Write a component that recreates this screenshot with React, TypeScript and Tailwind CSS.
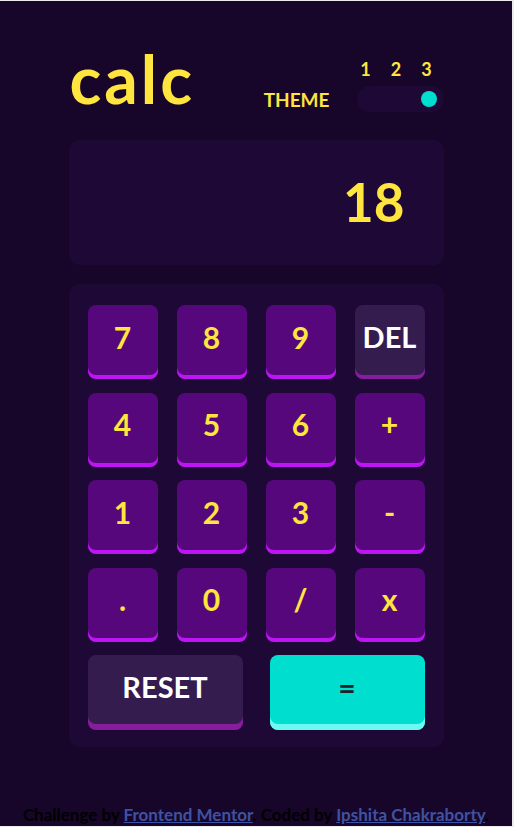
import React from "react";

const keys: { label: string; kind: "num" | "del" }[] = [
  { label: "7", kind: "num" },
  { label: "8", kind: "num" },
  { label: "9", kind: "num" },
  { label: "DEL", kind: "del" },
  { label: "4", kind: "num" },
  { label: "5", kind: "num" },
  { label: "6", kind: "num" },
  { label: "+", kind: "num" },
  { label: "1", kind: "num" },
  { label: "2", kind: "num" },
  { label: "3", kind: "num" },
  { label: "-", kind: "num" },
  { label: ".", kind: "num" },
  { label: "0", kind: "num" },
  { label: "/", kind: "num" },
  { label: "x", kind: "num" },
];

export default function App() {
  return (
    <div className="w-[514px] h-[827px] bg-[#ececec] pt-px" style={{ fontFamily: "Lato, 'Noto Sans', sans-serif" }}>
      <div className="w-[512px] h-[825px] bg-[#17062a] flex flex-col font-bold">
        <div className="w-[375px] mx-auto pt-[44.5px]">
          <header className="flex items-end justify-between">
            <h1 className="text-[66px] leading-none text-[#ffe53d] tracking-[3px] pl-[1px]">calc</h1>
            <div className="flex items-end gap-[27px]">
              <span className="text-[19px] leading-none text-[#ffe53d] mb-[3px]">THEME</span>
              <div className="flex flex-col gap-[8px]">
                <div className="flex pl-[2px] gap-[16.5px] text-[18px] leading-none text-[#ffe53d]">
                  <span className="w-[14px] text-center">1</span>
                  <span className="w-[14px] text-center">2</span>
                  <span className="w-[14px] text-center">3</span>
                </div>
                <div className="w-[87px] h-[26px] rounded-full bg-[#1e0936] flex items-center justify-end pr-[7px]">
                  <div className="w-[16px] h-[16px] rounded-full bg-[#00decf]" />
                </div>
              </div>
            </div>
          </header>

          <div className="mt-[28.5px] h-[125px] rounded-[10px] bg-[#1e0936] flex items-center justify-end pr-[39px] pb-[2px]">
            <span className="text-[53px] leading-none text-[#ffe53d]">18</span>
          </div>

          <div className="mt-[19px] h-[463px] rounded-[10px] bg-[#1e0936] pt-[21px] px-[19px] pb-[17px]">
            <div className="grid grid-cols-4 gap-x-[19px] gap-y-[13.5px]">
              {keys.map((k) =>
                k.kind === "del" ? (
                  <button
                    key={k.label}
                    className="h-[74px] rounded-lg bg-[#341c4f] shadow-[inset_0_-4px_0_#871c9c] flex items-center justify-center pb-[11px] text-[29px] leading-none text-white"
                  >
                    {k.label}
                  </button>
                ) : (
                  <button
                    key={k.label}
                    className="h-[74px] rounded-lg bg-[#56077c] shadow-[inset_0_-4px_0_#be15f4] flex items-center justify-center pb-[11px] text-[30px] leading-none text-[#ffe53d]"
                  >
                    {k.label}
                  </button>
                )
              )}
            </div>
            <div className="grid grid-cols-2 gap-x-[27px] mt-[13.5px]">
              <button className="h-[75px] rounded-lg bg-[#341c4f] shadow-[inset_0_-6px_0_#871c9c] flex items-center justify-center pb-[12px] text-[29px] leading-none text-white">
                RESET
              </button>
              <button className="h-[75px] rounded-lg bg-[#00decf] shadow-[inset_0_-6px_0_#6cf9f1] flex items-center justify-center pb-[12px] text-[30px] leading-none text-[#1a2327]">
                =
              </button>
            </div>
          </div>
        </div>

        <footer className="mt-auto pb-[3px] text-center text-[17px] leading-none text-black">
          Challenge by{" "}
          <a href="#" className="text-[#3e52a3] underline">
            Frontend Mentor
          </a>
          . Coded by{" "}
          <a href="#" className="text-[#3e52a3] underline">
            Ipshita Chakraborty
          </a>
          .
        </footer>
      </div>
    </div>
  );
}
